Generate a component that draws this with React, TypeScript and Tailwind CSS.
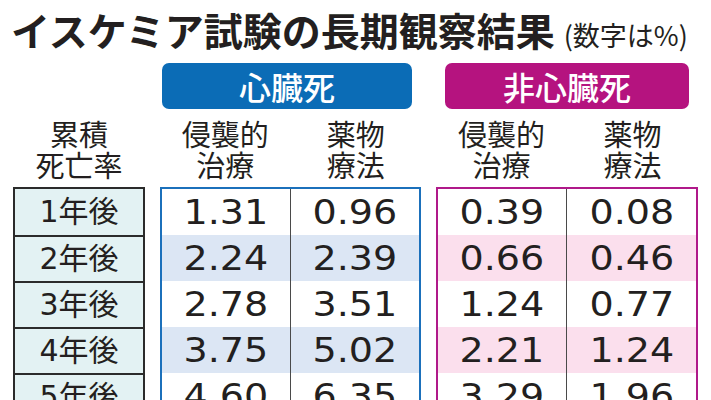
const FONT = { fontFamily: '"Noto Sans CJK JP", "Noto Sans", sans-serif' };
const NUM_FONT = { fontFamily: '"DejaVu Sans", "Noto Sans CJK JP", sans-serif' };

const rows = [
  { label: "1年後", cardiac: ["1.31", "0.96"], nonCardiac: ["0.39", "0.08"] },
  { label: "2年後", cardiac: ["2.24", "2.39"], nonCardiac: ["0.66", "0.46"] },
  { label: "3年後", cardiac: ["2.78", "3.51"], nonCardiac: ["1.24", "0.77"] },
  { label: "4年後", cardiac: ["3.75", "5.02"], nonCardiac: ["2.21", "1.24"] },
  { label: "5年後", cardiac: ["4.60", "6.35"], nonCardiac: ["3.29", "1.96"] },
];

function ColHeader({ lines }: { lines: string[] }) {
  return (
    <div className="flex flex-col items-center text-[29px] text-[#231f20]">
      {lines.map((l) => (
        <span key={l} className="block h-[31px] leading-[31px]">
          {l}
        </span>
      ))}
    </div>
  );
}

function Cell({ value, divider }: { value: string; divider?: boolean }) {
  return (
    <div
      className={`flex items-center justify-center ${
        divider ? "border-r border-[#4a4a4a]" : ""
      }`}
    >
      <span className="inline-block text-[34px] leading-none text-[#231f20] scale-x-[1.12]">
        {value}
      </span>
    </div>
  );
}

function DataTable({
  values,
  border,
  stripe,
}: {
  values: string[][];
  border: string;
  stripe: string;
}) {
  return (
    <div className={`border-2 ${border} border-b-0`}>
      {values.map((pair, i) => (
        <div
          key={i}
          className={`grid grid-cols-2 h-[46px] ${i % 2 === 1 ? stripe : "bg-white"}`}
          style={NUM_FONT}
        >
          <Cell value={pair[0]} divider />
          <Cell value={pair[1]} />
        </div>
      ))}
    </div>
  );
}

export default function App() {
  return (
    <div
      className="w-[711px] h-[400px] overflow-hidden bg-white relative"
      style={FONT}
    >
      <div className="flex items-end pl-[11px] pt-[5px]">
        <h1 className="text-[39px] leading-[48px] font-bold text-[#231f20]">
          イスケミア試験の長期観察結果
        </h1>
        <span className="ml-[9px] mb-[3px] text-[27px] leading-[30px] text-[#231f20]">
          (数字は%)
        </span>
      </div>

      <div className="grid grid-cols-[132px_261px_262px] gap-x-[15px] pl-[13px] mt-[10px]">
        <div />
        <div className="pl-[2px] pr-[9px]">
          <div className="h-[46px] rounded-[7px] bg-[#0b6cb6] flex items-center justify-center text-white text-[32px] font-medium">
            心臓死
          </div>
        </div>
        <div className="pl-[10px] pr-[9px] -ml-[1px]">
          <div className="h-[46px] rounded-[7px] bg-[#b5137f] flex items-center justify-center text-white text-[32px] font-medium">
            非心臓死
          </div>
        </div>

        <div className="pt-[9px] pb-[7px]">
          <ColHeader lines={["累積", "死亡率"]} />
        </div>
        <div className="grid grid-cols-2 pt-[9px] pb-[7px]">
          <ColHeader lines={["侵襲的", "治療"]} />
          <ColHeader lines={["薬物", "療法"]} />
        </div>
        <div className="grid grid-cols-2 pt-[9px] pb-[7px]">
          <ColHeader lines={["侵襲的", "治療"]} />
          <ColHeader lines={["薬物", "療法"]} />
        </div>

        <div className="border-2 border-[#2b2b2b] border-b-0 bg-[#e3f2f3]">
          {rows.map((r, i) => (
            <div
              key={r.label}
              className={`h-[46px] flex items-center justify-center text-[30px] leading-none text-[#231f20] ${
                i > 0 ? "border-t-2 border-[#2b2b2b]" : ""
              }`}
              style={NUM_FONT}
            >
              {r.label}
            </div>
          ))}
        </div>
        <DataTable
          values={rows.map((r) => r.cardiac)}
          border="border-[#1b70bb]"
          stripe="bg-[#dce6f4]"
        />
        <DataTable
          values={rows.map((r) => r.nonCardiac)}
          border="border-[#b0198a]"
          stripe="bg-[#fbdfed]"
        />
      </div>
    </div>
  );
}
